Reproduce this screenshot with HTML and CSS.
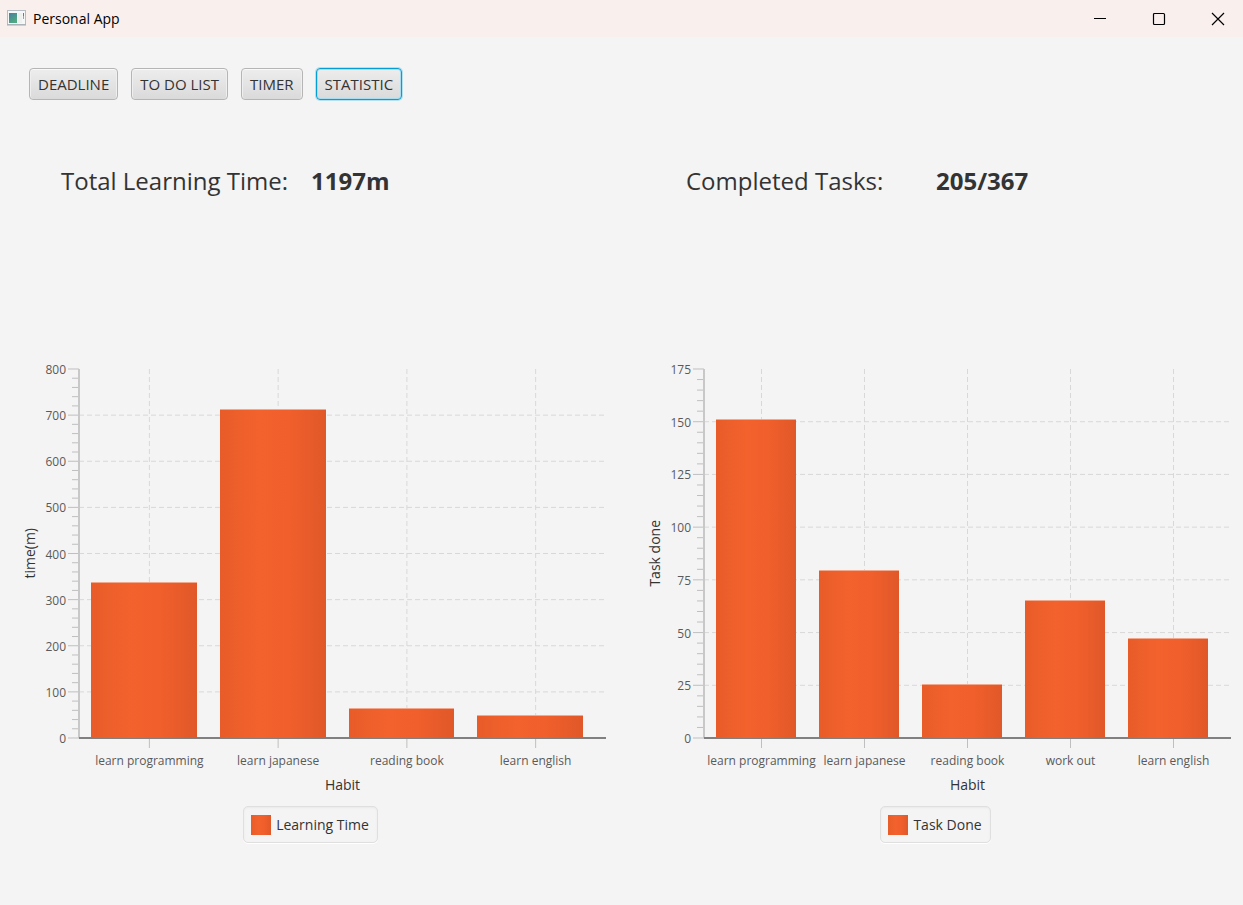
FILE: index.html
```html
<!DOCTYPE html>
<html lang="en">
<head>
<meta charset="utf-8">
<title>Personal App</title>
<link rel="stylesheet" href="styles.css">
</head>
<body>
<div class="window">
  <header class="titlebar">
    <svg class="app-icon" width="19" height="16" viewBox="0 0 19 16" aria-hidden="true">
      <defs>
        <linearGradient id="screen" x1="0" y1="0" x2="0.6" y2="1">
          <stop offset="0" stop-color="#477fa0"/>
          <stop offset="1" stop-color="#50aa80"/>
        </linearGradient>
      </defs>
      <rect x="0.5" y="0.5" width="18" height="14" fill="#f6f7f7" stroke="#b6bcc4"/>
      <path d="M0 15h19" stroke="#a3a9b0"/>
      <rect x="2" y="3" width="8" height="10" fill="url(#screen)"/>
      <rect x="11" y="3" width="4" height="10" fill="#edf2ef"/>
      <path d="M16.500 3v3" stroke="#4c82a2" stroke-width="1"/>
      <path d="M16.500 6v3" stroke="#78ba8b" stroke-width="1"/>
    </svg>
    <h1 class="app-title">Personal App</h1>
    <div class="window-controls">
      <button class="control" type="button" aria-label="Minimize"><svg width="14" height="14" viewBox="0 0 14 14"><path d="M1 6.500h12" stroke="#000"/></svg></button>
      <button class="control" type="button" aria-label="Maximize"><svg width="14" height="14" viewBox="0 0 14 14"><rect x="1.500" y="1.500" width="11" height="11" rx="1" fill="none" stroke="#000" stroke-width="1.200"/></svg></button>
      <button class="control" type="button" aria-label="Close"><svg width="14" height="14" viewBox="0 0 14 14"><path d="M1 1l12 12M13 1L1 13" stroke="#000" stroke-width="1.200"/></svg></button>
    </div>
  </header>
  <nav class="tabs">
    <button class="tab" type="button">DEADLINE</button>
    <button class="tab" type="button">TO DO LIST</button>
    <button class="tab" type="button">TIMER</button>
    <button class="tab tab-active" type="button" aria-current="page">STATISTIC</button>
  </nav>
  <main class="panels">
    <section class="panel">
      <p class="total"><span class="total-label">Total Learning Time:</span><strong>1197m</strong></p>
      <div class="chart" id="time-chart"></div>
    </section>
    <section class="panel">
      <p class="total"><span class="total-label">Completed Tasks:</span><strong>205/367</strong></p>
      <div class="chart" id="task-chart"></div>
    </section>
  </main>
</div>
<script src="charts.js"></script>
</body>
</html>
```
FILE: styles.css
```css
* {
  box-sizing: border-box;
}

body {
  margin: 0;
  background: #f4f4f4;
  color: #333;
  font-family: "Open Sans", "Noto Sans", sans-serif;
  font-size: 14px;
  line-height: 20px;
}

.window {
  display: flex;
  flex-direction: column;
  min-height: 100vh;
}

.titlebar {
  display: flex;
  align-items: center;
  height: 37px;
  padding-left: 7px;
  background: #f9f0ee;
  color: #000;
}

.app-icon {
  margin-bottom: 2px;
}

.app-title {
  margin: 0 auto 0 7px;
  font-size: 14px;
  font-weight: 400;
}

.window-controls {
  display: flex;
  gap: 9px;
}

.control {
  display: flex;
  align-items: center;
  justify-content: center;
  width: 50px;
  height: 36px;
  padding: 0;
  border: 0;
  background: none;
}

.tabs {
  display: flex;
  gap: 13px;
  padding: 31px 29px 0;
}

.tab {
  height: 32px;
  padding: 0 8px;
  border: 1px solid #b5b5b5;
  border-radius: 4px;
  background: linear-gradient(#ededed, #dadada);
  box-shadow: inset 0 1px #f9f9f9, inset 1px 0 #efefef, inset -1px 0 #efefef;
  color: #333;
  font-family: inherit;
  font-size: 15px;
  line-height: 20px;
}

.tab-active {
  border-color: #039ed3;
  box-shadow: 0 0 0 1px #b5e0ef, inset 0 0 0 1px #a8dcee;
}

.panels {
  display: grid;
  flex: 1;
  grid-template-columns: 1fr 1fr;
  gap: 34px;
  padding: 61px 12px 62px 15px;
}

.panel {
  display: flex;
  flex-direction: column;
  min-width: 0;
}

.total {
  display: flex;
  margin: 0 0 168px;
  padding-left: 46px;
  font-size: 24px;
  line-height: 40px;
}

.total-label {
  width: 250px;
}

.chart {
  display: grid;
  flex: 1;
  grid-template-columns: 30px 34px 1fr;
  grid-template-rows: minmax(200px, 1fr) 37px 24px auto;
}

.y-title {
  place-self: center;
  writing-mode: vertical-rl;
  transform: rotate(180deg);
}

.y-labels {
  display: flex;
  flex-direction: column-reverse;
  justify-content: space-between;
  margin: -7px 13px -9px 0;
  color: #5a5a5a;
  font-size: 12px;
  line-height: 16px;
  text-align: right;
}

.plot {
  display: grid;
}

.lines,
.bars {
  grid-area: 1 / 1;
  width: 100%;
  height: 100%;
}

.lines {
  overflow: visible;
}

.grid-line {
  stroke: #d8d8d8;
  stroke-dasharray: 5 3;
}

.tick {
  stroke: #bfbfbf;
}

.y-line {
  stroke: #c8c8c8;
  stroke-width: 2;
}

.x-line {
  stroke: #808080;
  stroke-width: 2;
}

.bars {
  z-index: 1;
  display: flex;
  align-items: flex-end;
  padding: 0 6px;
}

.slot {
  display: flex;
  flex: 1;
  align-items: flex-end;
  height: 100%;
  padding: 0 17px 0 6px;
}

.bar,
.swatch {
  background: linear-gradient(90deg, #e85c29, #f3622d 38%, #f05f2c 65%, #e15828);
}

.bar {
  width: 100%;
  box-shadow: 0 -1px #f1a88d;
}

.x-labels {
  display: flex;
  grid-column: 3;
  padding: 15px 6px 0;
  color: #5a5a5a;
  font-size: 12px;
  line-height: 16px;
}

.x-label {
  display: flex;
  flex: 1 1 0;
  justify-content: center;
  min-width: 0;
  white-space: nowrap;
}

.x-title {
  grid-column: 3;
  text-align: center;
}

.legend {
  display: flex;
  grid-column: 1 / -1;
  align-items: center;
  justify-self: center;
  gap: 5px;
  height: 37px;
  margin-top: 7px;
  padding: 0 8px 0 7px;
  border: 1px solid #dfdfdf;
  border-radius: 5px;
  box-shadow: inset 0 1px 2px #e9e9e9, 0 1px #fff;
}

.swatch {
  width: 20px;
  height: 20px;
}
```
FILE: charts.js
```js
const charts = [
  {
    id: "time-chart", yTitle: "time(m)", series: "Learning Time",
    max: 800, step: 100,
    data: [["learn programming", 337], ["learn japanese", 712], ["reading book", 62], ["learn english", 47]]
  },
  {
    id: "task-chart", yTitle: "Task done", series: "Task Done",
    max: 175, step: 25,
    data: [["learn programming", 151], ["learn japanese", 79], ["reading book", 25], ["work out", 65], ["learn english", 47]]
  }
];

const line = (name, x1, y1, x2, y2) =>
  `<line class="${name}" x1="${x1}" y1="${y1}" x2="${x2}" y2="${y2}"/>`;

for (const chart of charts) {
  const steps = chart.max / chart.step;
  const count = chart.data.length;
  let lines = "";
  let labels = "";

  for (let i = 0; i <= steps * 5; i++) {
    const y = `${100 - i * 20 / steps}%`;
    const major = i % 5 === 0;
    lines += line("tick", major ? -11 : -7, y, 0, y);
    if (major) {
      labels += `<span>${chart.step * i / 5}</span>`;
      if (i > 0 && i < steps * 5) lines += line("grid-line", 0, y, "100%", y);
    }
  }

  // Category lines sit at the middle of each slot, inside the 6px side padding.
  const slots = chart.data.map((_, i) => {
    const part = (i + 0.5) / count;
    const x = `calc(${part * 100}% + ${6 - 12 * part}px)`;
    return `<g style="transform: translateX(${x}); transform-box: view-box">` +
      line("grid-line", 0, 0, 0, "100%") +
      `<svg y="100%" overflow="visible">${line("tick", 0, 0, 0, 10)}</svg></g>`;
  }).join("");

  lines += slots + line("y-line", 0, 0, 0, "100%") + line("x-line", 0, "100%", "100%", "100%");

  document.getElementById(chart.id).innerHTML = `
    <div class="y-title">${chart.yTitle}</div>
    <div class="y-labels">${labels}</div>
    <div class="plot">
      <svg class="lines" aria-hidden="true">${lines}</svg>
      <div class="bars">${chart.data.map(([, value]) =>
        `<div class="slot"><div class="bar" style="height: ${value / chart.max * 100}%"></div></div>`).join("")}</div>
    </div>
    <div class="x-labels">${chart.data.map(([name]) => `<span class="x-label">${name}</span>`).join("")}</div>
    <div class="x-title">Habit</div>
    <div class="legend"><span class="swatch"></span><span>${chart.series}</span></div>`;
}
```
